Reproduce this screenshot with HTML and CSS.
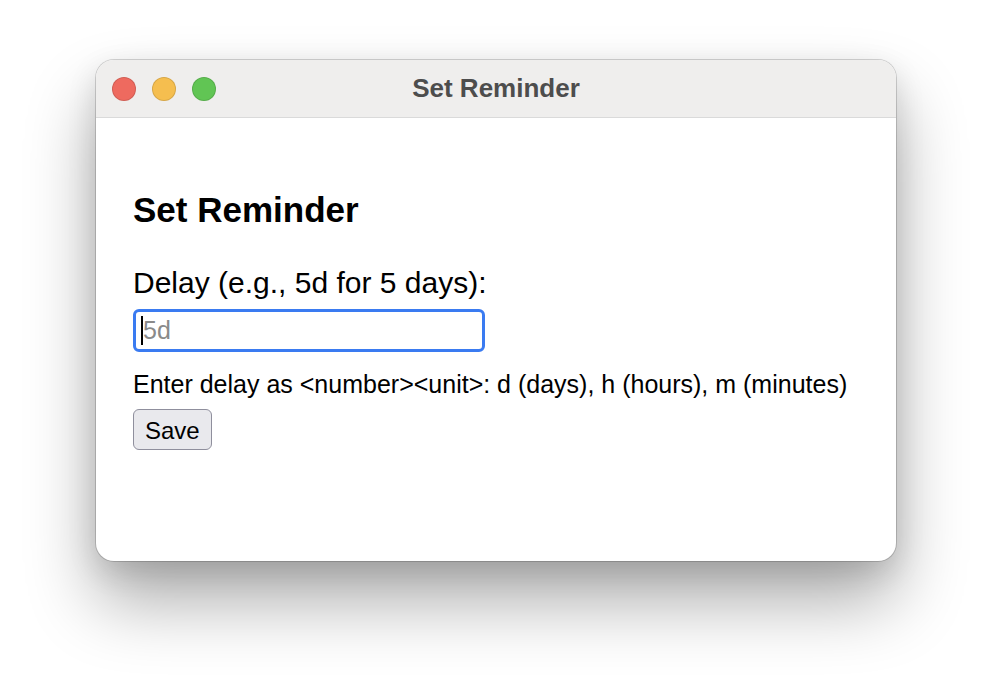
FILE: index.html
```html
<!DOCTYPE html>
<html lang="en">
<head>
<meta charset="utf-8">
<title>Set Reminder</title>
<link rel="stylesheet" href="styles.css">
</head>
<body>
<div class="stage">
  <div class="window">
    <div class="titlebar">
      <div class="lights">
        <span class="light red"></span>
        <span class="light yellow"></span>
        <span class="light green"></span>
      </div>
      <div class="title">Set Reminder</div>
    </div>
    <div class="content">
      <h2 class="heading">Set Reminder</h2>
      <label class="label" for="delay">Delay (e.g., 5d for 5 days):</label>
      <div class="field"><span class="caret"></span><input id="delay" class="input" type="text" placeholder="5d"></div>
      <p class="help">Enter delay as &lt;number&gt;&lt;unit&gt;: d (days), h (hours), m (minutes)</p>
      <button class="btn" type="button">Save</button>
    </div>
  </div>
</div>
</body>
</html>
```
FILE: styles.css
```css
html, body {
  margin: 0;
  padding: 0;
  background: #ffffff;
}
body {
  font-family: "Liberation Sans", Arial, sans-serif;
  color: #000;
}
.stage {
  width: 992px;
  height: 694px;
  display: flex;
  justify-content: center;
  align-items: flex-start;
  padding-top: 60px;
  box-sizing: border-box;
  overflow: hidden;
}
.window {
  width: 800px;
  height: 501px;
  border-radius: 18px;
  background: #ffffff;
  box-shadow: 0 0 0 1px rgba(0,0,0,0.16), 0 40px 70px rgba(0,0,0,0.33), 0 10px 30px rgba(0,0,0,0.12);
  overflow: hidden;
  display: flex;
  flex-direction: column;
}
.titlebar {
  position: relative;
  height: 57px;
  flex: none;
  background: #efeeed;
  border-bottom: 1px solid #dadada;
  display: flex;
  align-items: center;
  justify-content: center;
}
.lights {
  position: absolute;
  left: 16px;
  top: 17px;
  display: flex;
  gap: 16px;
}
.light {
  width: 24px;
  height: 24px;
  box-sizing: border-box;
  border-radius: 50%;
  border: 0.5px solid rgba(0,0,0,0.12);
}
.red { background: #ee6a5f; }
.yellow { background: #f5be4f; }
.green { background: #61c554; }
.title {
  font-size: 26px;
  font-weight: bold;
  color: #4d4d4d;
}
.content {
  padding: 72px 37px 0 37px;
  display: flex;
  flex-direction: column;
  align-items: flex-start;
}
.heading {
  margin: 0;
  font-size: 35px;
  line-height: 40px;
  font-weight: bold;
}
.label {
  margin-top: 36px;
  font-size: 30px;
  line-height: 34px;
}
.field {
  position: relative;
  margin-top: 9px;
}
.input {
  display: block;
  width: 352px;
  height: 43px;
  box-sizing: border-box;
  border: 3px solid #3a7bf1;
  border-radius: 6px;
  padding: 0 5px 0 7px;
  font-family: "Liberation Sans", Arial, sans-serif;
  font-size: 25px;
  color: #000;
  background: #fff;
  outline: none;
}
.input::placeholder {
  color: #8a8a8a;
}
.caret {
  position: absolute;
  left: 8px;
  top: 7px;
  width: 2px;
  height: 29px;
  background: #000;
  z-index: 1;
}
.help {
  margin: 18px 0 0 0;
  font-size: 25px;
  line-height: 29px;
}
.btn {
  margin-top: 10px;
  height: 41px;
  padding: 2px 11px 0 11px;
  font-family: "Liberation Sans", Arial, sans-serif;
  font-size: 24px;
  color: #000;
  background: #e9e9ed;
  border: 1px solid #8f8f9d;
  border-radius: 6px;
}
```
